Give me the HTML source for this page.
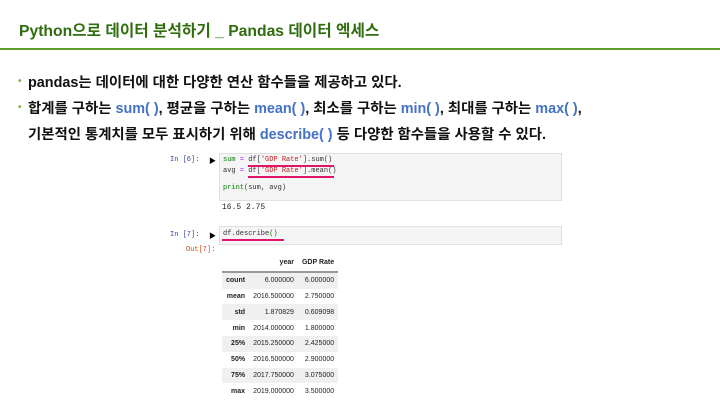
<!DOCTYPE html>
<html><head><meta charset="utf-8"><style>
body{margin:0;width:720px;height:405px;background:#fff;position:relative;overflow:hidden;font-family:"Liberation Sans","Noto Sans CJK KR",sans-serif}
.t{position:absolute;left:19px;top:18px;font-size:15.7px;font-weight:bold;color:#2f6d0f}
.hr{position:absolute;left:0;top:48px;width:720px;height:2px;background:#5c9e2a}
.b{position:absolute;left:28px;font-size:14.4px;font-weight:bold;color:#111;white-space:nowrap}
.b .d{position:absolute;left:-10px;top:5px;color:#7fb342;font-size:10px}
.bl{color:#4472c4}
.m{position:absolute;font-family:"Liberation Mono","Noto Sans CJK KR",monospace;font-size:7px;white-space:nowrap}
.box{position:absolute;left:219px;width:341px;background:#f5f5f5;border:1px solid #e0e0e0}
.ul{position:absolute;height:2px;background:#e0166a}
table{position:absolute;left:222px;top:255px;border-collapse:collapse;font-size:7px;color:#222}
td,th{padding:0 4px;height:15.8px;text-align:right}
th{font-weight:bold}
tr.h th{border-bottom:2px solid #999}
tr:nth-child(even){background:#f0f0f0}
</style></head><body>
<div class="t">Python으로 데이터 분석하기 _ Pandas 데이터 엑세스</div>
<div class="hr"></div>
<div class="b" style="top:71px"><span class="d">•</span>pandas는 데이터에 대한 다양한 연산 함수들을 제공하고 있다.</div>
<div class="b" style="top:97px"><span class="d">•</span>합계를 구하는 <span class="bl">sum( )</span>, 평균을 구하는 <span class="bl">mean( )</span>, 최소를 구하는 <span class="bl">min( )</span>, 최대를 구하는 <span class="bl">max( )</span>,</div>
<div class="b" style="top:123px">기본적인 통계치를 모두 표시하기 위해 <span class="bl">describe( )</span> 등 다양한 함수들을 사용할 수 있다.</div>
<div class="m" style="left:170px;top:156px;color:#303f9f">In [6]:</div>
<div class="m" style="left:209px;top:156px;font-weight:bold">▶</div>
<div class="box" style="top:153px;height:46px"></div>
<div class="m" style="left:223px;top:156px;color:#333"><span style="color:#008000">sum</span> <span style="color:#a2f">=</span> df[<span style="color:#b22">'GDP Rate'</span>].sum()</div>
<div class="m" style="left:223px;top:167px;color:#333">avg <span style="color:#a2f">=</span> df[<span style="color:#b22">'GDP Rate'</span>].mean()</div>
<div class="m" style="left:223px;top:184px;color:#333"><span style="color:#008000">print</span>(sum, avg)</div>
<div class="ul" style="left:248px;top:165px;width:86px"></div>
<div class="ul" style="left:248px;top:176px;width:86px"></div>
<div class="m" style="left:222px;top:203px;color:#222;font-size:8px">16.5 2.75</div>
<div class="m" style="left:170px;top:231px;color:#303f9f">In [7]:</div>
<div class="m" style="left:209px;top:231px;font-weight:bold">▶</div>
<div class="box" style="top:226px;height:17px"></div>
<div class="m" style="left:223px;top:230px;color:#333">df.describe<span style="color:#008000">()</span></div>
<div class="ul" style="left:222px;top:239px;width:62px"></div>
<div class="m" style="left:186px;top:246px;color:#d84315">Out[7]:</div>
<table>
<tr class="h"><th></th><th>year</th><th>GDP Rate</th></tr>
<tr><th>count</th><td>6.000000</td><td>6.000000</td></tr>
<tr><th>mean</th><td>2016.500000</td><td>2.750000</td></tr>
<tr><th>std</th><td>1.870829</td><td>0.609098</td></tr>
<tr><th>min</th><td>2014.000000</td><td>1.800000</td></tr>
<tr><th>25%</th><td>2015.250000</td><td>2.425000</td></tr>
<tr><th>50%</th><td>2016.500000</td><td>2.900000</td></tr>
<tr><th>75%</th><td>2017.750000</td><td>3.075000</td></tr>
<tr><th>max</th><td>2019.000000</td><td>3.500000</td></tr>
</table>
</body></html>
